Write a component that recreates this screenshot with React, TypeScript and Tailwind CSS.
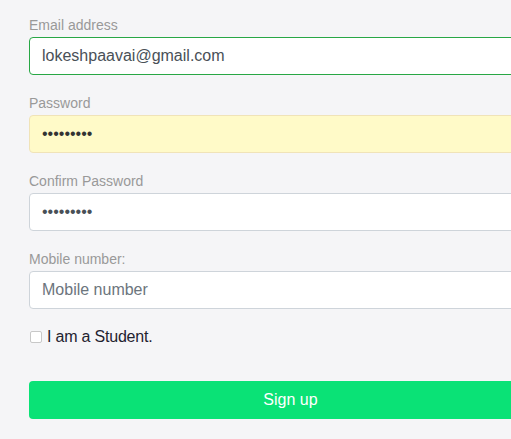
export default function App() {
	return (
		<div className="h-[439px] w-full overflow-hidden bg-[#f5f5f7] font-['Liberation_Sans',Arial,sans-serif]">
			<form className="ml-[29px] w-[523px] pt-[13px]">
				<div className="mb-4">
					<label className="block text-[14px] leading-6 text-[#999]">Email address</label>
					<input
						type="email"
						defaultValue="lokeshpaavai@gmail.com"
						className="block h-[38px] w-full rounded border border-[#28a745] bg-white px-3 text-base text-[#495057] outline-none"
					/>
				</div>
				<div className="mb-4">
					<label className="block text-[14px] leading-6 text-[#999]">Password</label>
					<input
						type="password"
						defaultValue="123456789"
						className="block h-[38px] w-full rounded border border-[#f0e3b8] bg-[#fffac8] px-3 text-base text-[#333] outline-none"
					/>
				</div>
				<div className="mb-4">
					<label className="block text-[14px] leading-6 text-[#999]">Confirm Password</label>
					<input
						type="password"
						defaultValue="123456789"
						className="block h-[38px] w-full rounded border border-[#ced4da] bg-white px-3 text-base text-[#495057] outline-none"
					/>
				</div>
				<div className="mb-4">
					<label className="block text-[14px] leading-6 text-[#999]">Mobile number:</label>
					<input
						type="text"
						placeholder="Mobile number"
						className="block h-[38px] w-full rounded border border-[#ced4da] bg-white px-3 text-base text-[#495057] outline-none placeholder:text-[#6c757d]"
					/>
				</div>
				<div className="mb-8 flex h-6 items-center">
					<input
						type="checkbox"
						className="ml-px mr-[5px] h-3 w-3 appearance-none rounded-[2px] border border-[#c8c8c8] bg-white"
					/>
					<span className="text-base leading-6 tracking-[-0.2px] text-[#1f2330]">I am a Student.</span>
				</div>
				<button
					type="button"
					className="block h-[38px] w-full rounded bg-[#0ae276] text-base text-white"
				>
					Sign up
				</button>
			</form>
		</div>
	)
}
